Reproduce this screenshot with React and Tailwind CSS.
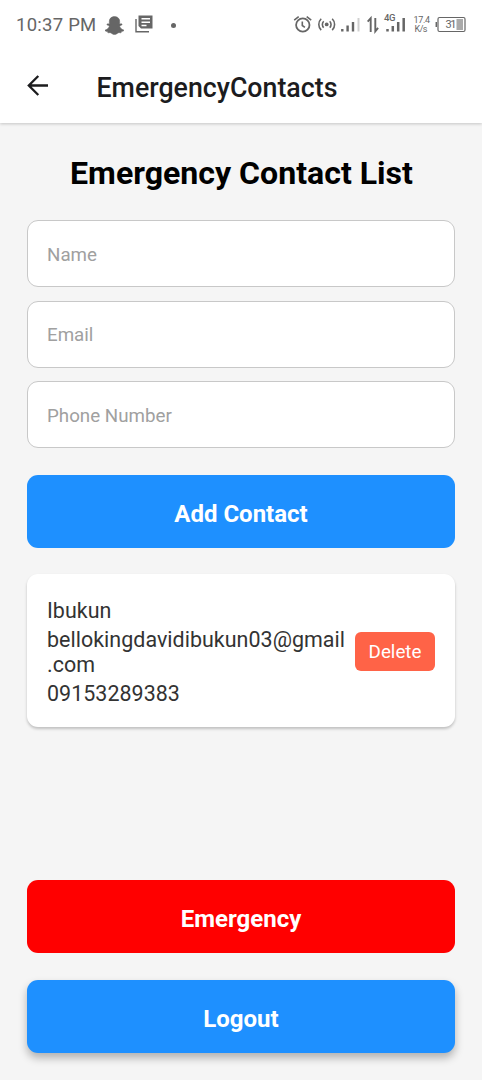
import React from "react";
import { FaSnapchatGhost } from "react-icons/fa";

function StatusBar() {
  return (
    <div className="flex h-[50px] items-center justify-between pr-[16px] pl-[16px] text-[#666]">
      <div className="flex items-center">
        <span className="w-[81px] text-[18.5px] leading-[22px] whitespace-nowrap tracking-[0.25px]">10:37 PM</span>
        <FaSnapchatGhost className="ml-[8px] h-[19px] w-[19px]" stroke="currentColor" strokeWidth="14" />
        <svg className="ml-[11px] -mt-[2px]" width="18" height="18" viewBox="0 0 18 18" fill="none">
          <path d="M1 4v12.7h13" stroke="currentColor" strokeWidth="1.4" />
          <path d="M3.5 0.5h14v13h-11.5l-2.5-2.5z" fill="currentColor" />
          <path d="M6.5 3.8h8.5M6.5 7.2h8.5M6.5 10.4h5" stroke="#fff" strokeWidth="1.5" />
        </svg>
        <span className="ml-[18px] size-[5px] rounded-full bg-[#666]" />
      </div>
      <svg width="174" height="30" viewBox="292 10 174 30" fill="none" stroke="#666">
        <circle cx="302.8" cy="25" r="6.7" strokeWidth="1.8" />
        <path d="M302.3 21.5v4l2.6 1.8M294.2 20.2l4.5-3.6M311.2 20.2l-4.5-3.6" strokeWidth="1.6" />
        <circle cx="326.7" cy="24.4" r="1.9" fill="#666" stroke="none" />
        <path d="M323.7 21.2a4.5 4.5 0 0 0 0 6.4M329.7 21.2a4.5 4.5 0 0 1 0 6.4M321.2 18.7a8 8 0 0 0 0 11.4M332.2 18.7a8 8 0 0 1 0 11.4" strokeWidth="1.6" />
        <path d="M342.3 29v2.5M347.6 25.5v6M353 22v9.5" strokeWidth="2.4" />
        <path d="M358.5 18v13.5" stroke="#d0d0d0" strokeWidth="2" />
        <path d="M370.7 32V18.2l-3 3.4M375.3 18v13.3l2.8-3.4" strokeWidth="1.9" />
        <path d="M387.5 29v2.5M392.8 26v5.5M398.2 22v9.5M403.7 18v13.5" strokeWidth="2.5" />
        <path d="M439.5 17.5h24q1.5 0 1.5 1.5v11q0 1.5-1.5 1.5h-24q-1.5 0-1.5-1.5v-11q0-1.5 1.5-1.5z" strokeWidth="1.2" />
        <path d="M436.3 22v5" strokeWidth="1.5" />
        <rect x="456.5" y="19" width="6.5" height="11" fill="#aaa" stroke="none" />
        <g className="font-[Roboto]" fill="#666" stroke="none">
          <text x="384" y="21" fontSize="9.5" fontWeight="500" textLength="11.5">4G</text>
          <text x="413.5" y="22.5" fontSize="9" textLength="16.5">17.4</text>
          <text x="414.5" y="32" fontSize="9" textLength="13">K/s</text>
          <text x="445.5" y="28.2" fontSize="11" textLength="11">31</text>
        </g>
      </svg>
    </div>
  );
}

function Header() {
  return (
    <header className="relative h-[123px] shrink-0 bg-white shadow-[0_1px_3px_rgba(0,0,0,0.2)]">
      <StatusBar />
      <div className="flex h-[73px] items-center pl-[27px]">
        <svg className="-mt-[1px]" width="22" height="22" viewBox="0 0 22 22" fill="none" stroke="#1c1c1e" strokeWidth="2.3">
          <path d="M21 10.5H1.8M11.3 1L1.8 10.5l9.5 9.5" />
        </svg>
        <h1 className="ml-[47.5px] pt-[2px] text-[26.75px] leading-[34px] font-medium text-[#1c1c1e]">EmergencyContacts</h1>
      </div>
    </header>
  );
}

function Field({ label }) {
  return (
    <input
      aria-label={label}
      placeholder={label}
      className="h-[67px] w-full rounded-[11px] border border-[#c8c8c8] bg-white px-[19px] pt-[2px] text-[18.75px] placeholder:text-[#a0a0a0]"
    />
  );
}

const buttonClass =
  "flex h-[73px] w-full shrink-0 items-center justify-center rounded-[11px] pt-[5px] text-[24px] font-bold text-white";

export default function App() {
  return (
    <div className="flex h-[1080px] w-[482px] flex-col overflow-hidden bg-[#f5f5f5] font-[Roboto,sans-serif]">
      <Header />
      <main className="flex flex-1 flex-col px-[27px] pt-[31px]">
        <h2 className="pl-px text-center text-[32.1px] leading-[38px] font-bold text-black">Emergency Contact List</h2>
        <div className="mt-[28.4px] flex flex-col gap-[13.4px]">
          <Field label="Name" />
          <Field label="Email" />
          <Field label="Phone Number" />
        </div>
        <button className={`${buttonClass} mt-[26.8px] bg-[#1e90ff]`}>Add Contact</button>
        <section className="mt-[26px] flex h-[153px] shrink-0 items-center rounded-[11px] bg-white px-[20px] shadow-[0_2px_3px_rgba(0,0,0,0.22)]">
          <div className="w-[308px] pt-[4px] text-[21.45px] leading-[25.5px] tracking-[0.03px] text-[#333]">
            <p>Ibukun</p>
            <p className="mt-[3.5px] whitespace-nowrap">bellokingdavidibukun03@gmail<br />.com</p>
            <p className="mt-[3.5px]">09153289383</p>
          </div>
          <button className="mt-[2px] h-[39px] w-[80px] shrink-0 rounded-[6px] bg-[#ff6347] pt-[2px] text-[18.75px] text-white">Delete</button>
        </section>
        <button className={`${buttonClass} mt-[153px] bg-[#ff0000]`}>Emergency</button>
        <button className={`${buttonClass} mt-[27px] bg-[#1e90ff] shadow-[0_5px_8px_rgba(0,0,0,0.28)]`}>Logout</button>
      </main>
    </div>
  );
}
